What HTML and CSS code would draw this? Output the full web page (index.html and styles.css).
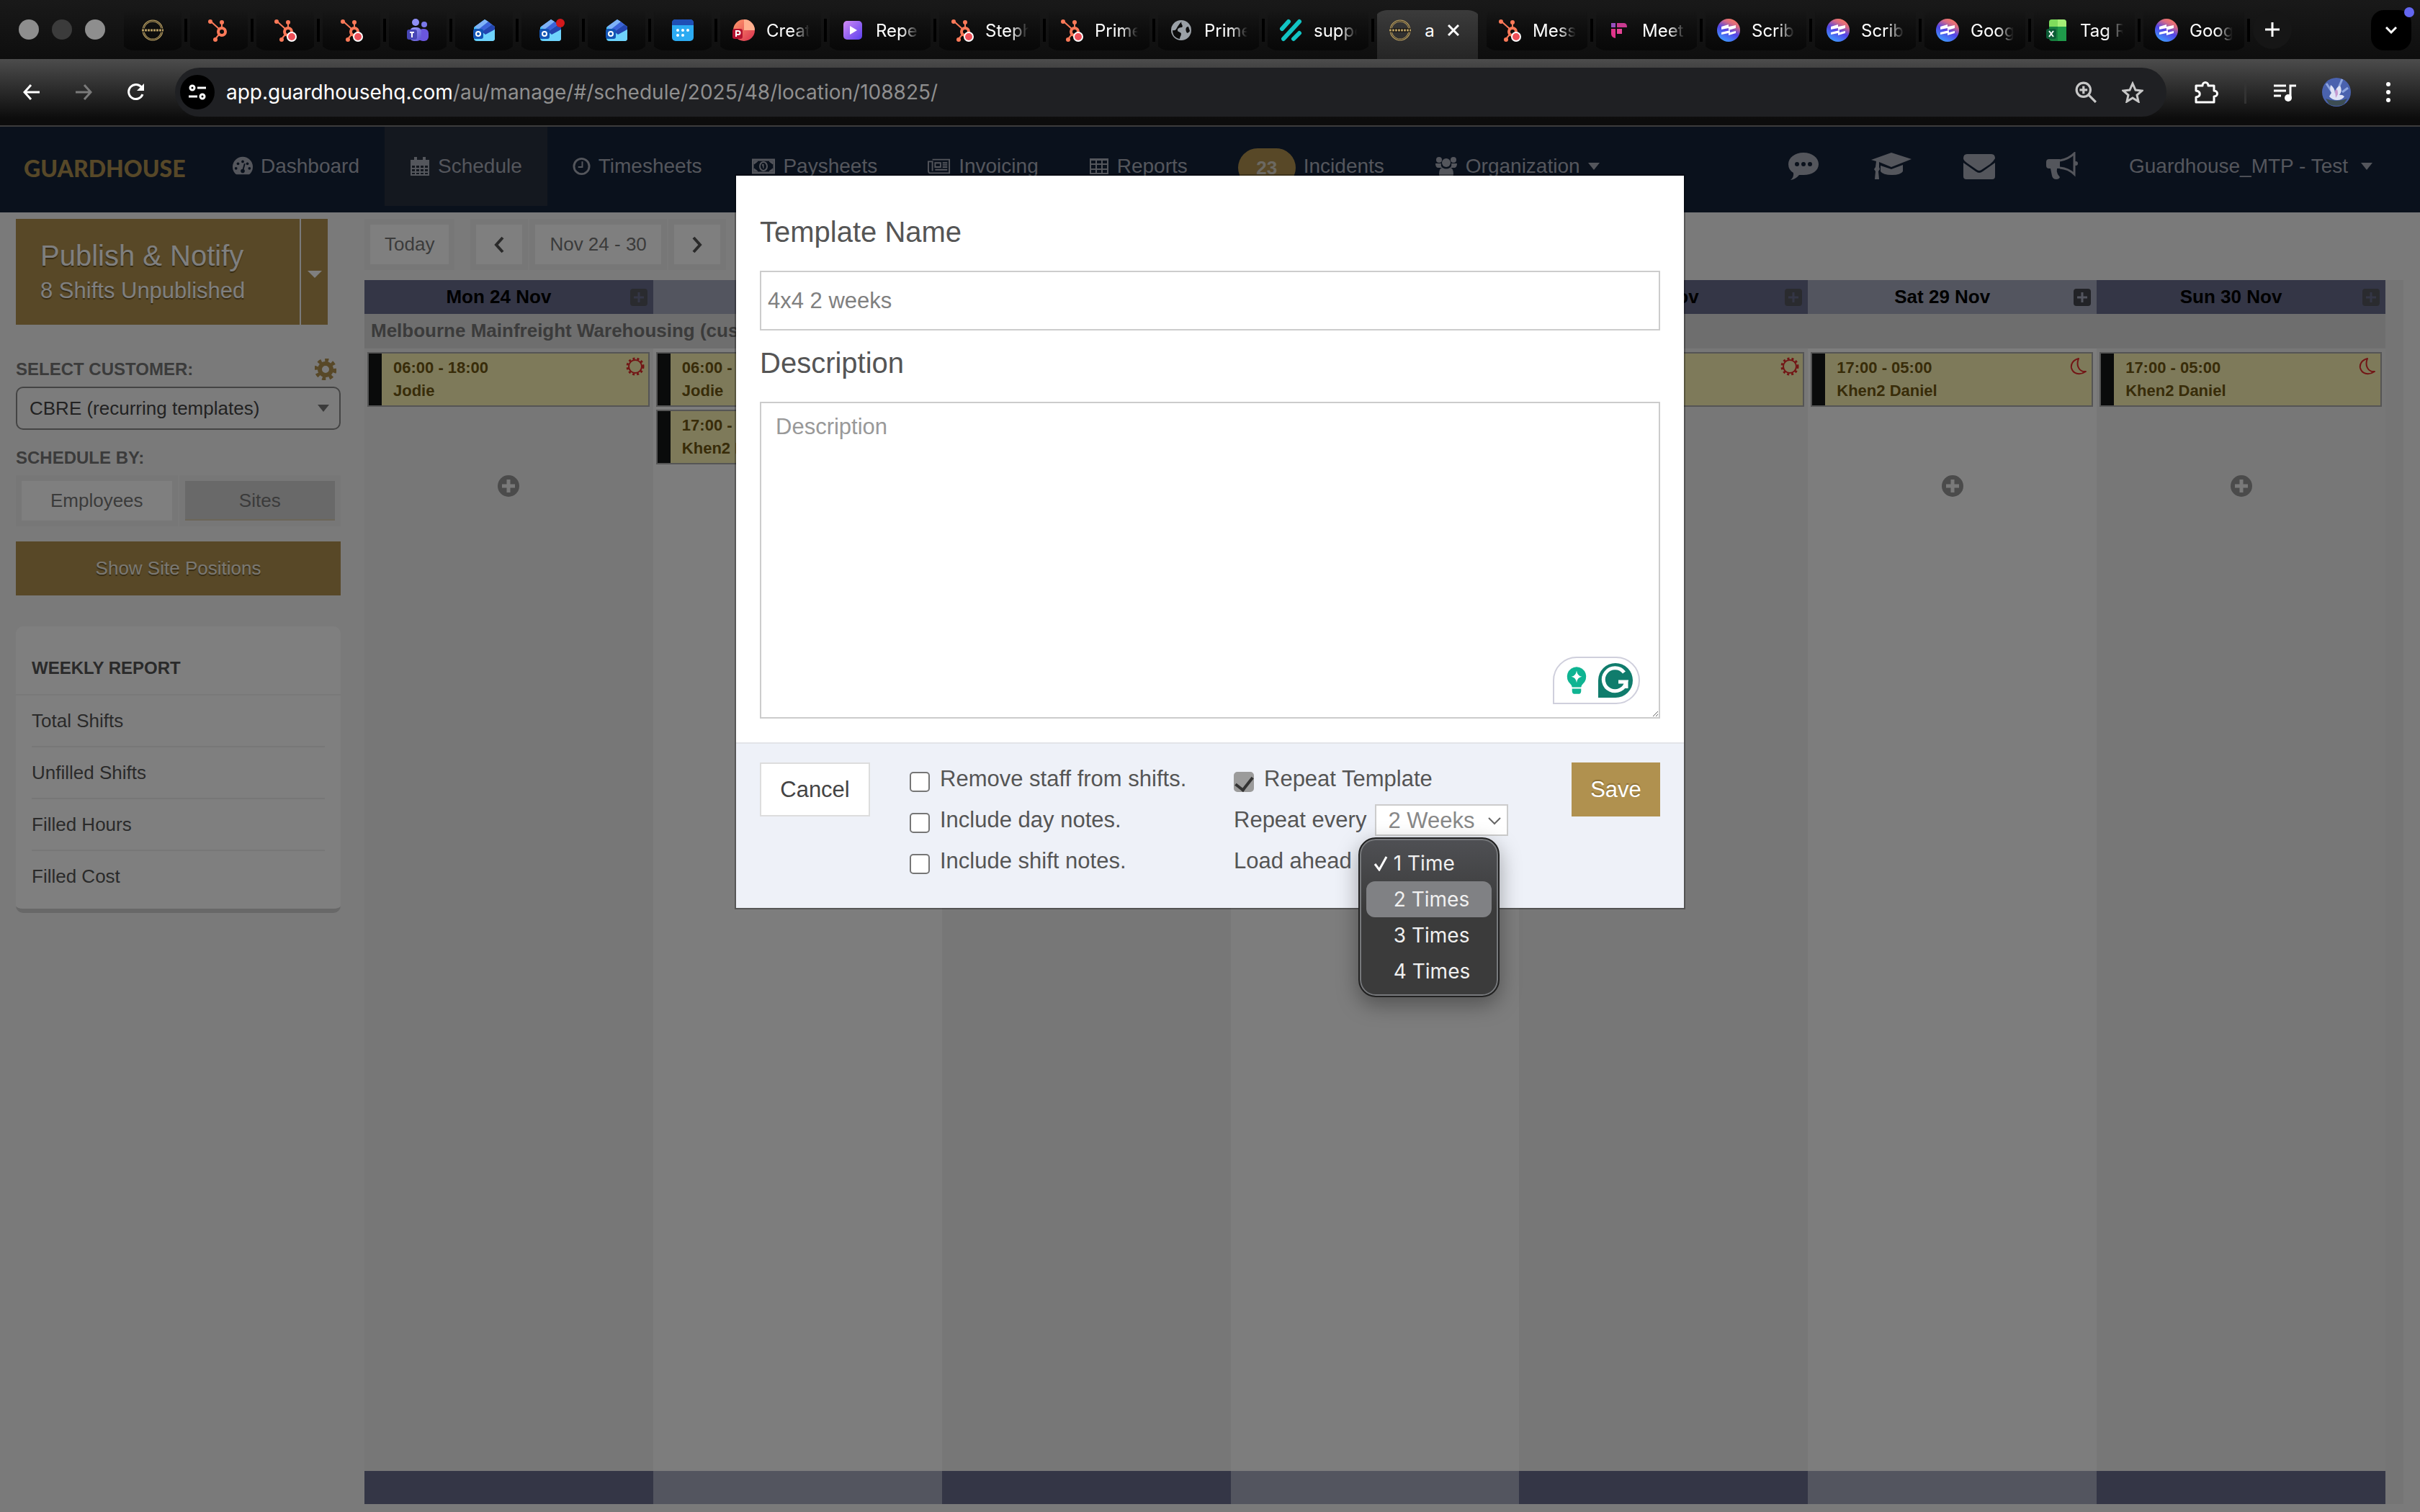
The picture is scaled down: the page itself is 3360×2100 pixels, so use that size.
FILE: index.html
```html
<!DOCTYPE html>
<html lang="en">
<head>
    <meta charset="UTF-8">
    <meta name="viewport" content="width=device-width, initial-scale=1.0">
    <title>Guardhouse - Schedule</title>
    <link rel="stylesheet" href="styles.css">
</head>
<body>
    <!-- Shared icons -->
    <svg class="sprite" aria-hidden="true">
        <defs>
            <linearGradient id="gTeams" x1="0" y1="0" x2="1" y2="1"><stop offset="0" stop-color="#a3a8ff"/><stop offset="1" stop-color="#5b4fd0"/></linearGradient>
            <linearGradient id="gMail" x1="0" y1="0" x2="1" y2="1"><stop offset="0" stop-color="#2fb7f7"/><stop offset="1" stop-color="#8fe6ff"/></linearGradient>
            <linearGradient id="gScribe" x1="0.8" y1="0" x2="0.3" y2="1"><stop offset="0" stop-color="#ff7a5c"/><stop offset="0.25" stop-color="#d76a86"/><stop offset="0.55" stop-color="#5144e6"/><stop offset="1" stop-color="#3f9dff"/></linearGradient>
            <linearGradient id="gPlay" x1="0" y1="0" x2="1" y2="1"><stop offset="0" stop-color="#d38bf5"/><stop offset="1" stop-color="#5a3fee"/></linearGradient>
            <linearGradient id="gPpt" x1="0" y1="0" x2="1" y2="1"><stop offset="0" stop-color="#ff9a6b"/><stop offset="1" stop-color="#d9304f"/></linearGradient>
        </defs>
        <symbol id="i-guard" viewBox="0 0 32 32">
            <circle cx="16" cy="16" r="13" fill="none" stroke="#b59c62" stroke-width="3"/>
            <circle cx="16" cy="16" r="13" fill="none" stroke="#3b3320" stroke-width="1"/>
            <path d="M1 16h30" stroke="#0b0b0b" stroke-width="5"/>
            <path d="M1 16h30" stroke="#b59c62" stroke-width="3" stroke-dasharray="3 1"/>
        </symbol>
        <symbol id="i-hub" viewBox="0 0 32 32">
            <g fill="none" stroke="#ff7a59">
                <circle cx="20" cy="18" r="5" stroke-width="4"/>
                <path d="M20 12V5M16 14L5 4M16 22l-5 6" stroke-width="2"/>
            </g>
            <g fill="#ff7a59"><circle cx="20" cy="5" r="3"/><circle cx="4" cy="4" r="3"/><circle cx="11" cy="29" r="3"/></g>
        </symbol>
        <symbol id="i-hubdot" viewBox="0 0 32 32">
            <use href="#i-hub"/>
            <circle cx="25" cy="25" r="7" fill="#fff"/><circle cx="25" cy="25" r="5" fill="#ef5059"/>
        </symbol>
        <symbol id="i-teams" viewBox="0 0 32 32">
            <circle cx="13" cy="5" r="5" fill="#8f8ff5"/><circle cx="25" cy="8" r="4" fill="#7a78ea"/>
            <rect x="17" y="14" width="14" height="17" rx="6" fill="#6a56dd"/>
            <rect x="5" y="12" width="16" height="19" rx="6" fill="url(#gTeams)"/>
            <rect x="1" y="15" width="14" height="14" rx="3" fill="#4746b5"/>
            <path d="M5 19h6M8 19v7" stroke="#fff" stroke-width="2"/>
        </symbol>
        <symbol id="i-outlook" viewBox="0 0 32 32">
            <path d="M2 12L17 1l14 10v16q0 4-4 4H6q-4 0-4-4z" fill="url(#gMail)"/>
            <path d="M3 11L17 1l5 3L8 15z" fill="#7fb2f8"/>
            <path d="M8 15L22 4l5 4-14 10z" fill="#3c62d8"/>
            <path d="M13 18L27 8l4 3v4L18 22z" fill="#2445b0"/>
            <path d="M31 15v12q0 4-4 4H8z" fill="#6fd3fc"/>
            <rect x="1" y="14" width="14" height="14" rx="3" fill="#1355b5"/>
            <circle cx="8" cy="21" r="3" fill="none" stroke="#fff" stroke-width="2"/>
        </symbol>
        <symbol id="i-calapp" viewBox="0 0 32 32">
            <rect x="1" y="1" width="30" height="30" rx="5" fill="#2cabf2"/>
            <path d="M1 9V6q0-5 5-5h20q5 0 5 5v3z" fill="#1f4fb5"/>
            <g fill="#fff"><circle cx="9" cy="16" r="2"/><circle cx="16" cy="16" r="2"/><circle cx="23" cy="16" r="2"/><circle cx="9" cy="23" r="2"/><circle cx="16" cy="23" r="2"/></g>
        </symbol>
        <symbol id="i-ppt" viewBox="0 0 32 32">
            <circle cx="17" cy="16" r="15" fill="url(#gPpt)"/>
            <path d="M17 1a15 15 0 0 1 15 15H17z" fill="#ffb08f"/>
            <rect x="1" y="14" width="14" height="14" rx="3" fill="#b3122f"/>
            <path d="M6 25v-8h3a2 2 0 0 1 0 5H6" fill="none" stroke="#fff" stroke-width="2"/>
        </symbol>
        <symbol id="i-play" viewBox="0 0 32 32">
            <rect x="3" y="3" width="26" height="26" rx="5" fill="url(#gPlay)"/><path d="M12 10l10 6-10 6z" fill="#fff"/>
        </symbol>
        <symbol id="i-globe" viewBox="0 0 32 32">
            <circle cx="16" cy="16" r="14" fill="#9aa0a6"/>
            <path d="M17 4c-3 3 3 5 0 8-3 0-6 1-6 4s5 2 5 5-2 4-2 7C7 27 4 22 4 16c5 1 5-2 7-5s3-5 6-7zM26 11c-4 0-4 4-3 7s3 2 5-1z" fill="#0c0c0c"/>
        </symbol>
        <symbol id="i-support" viewBox="0 0 32 32">
            <g stroke="#12c4c4" stroke-width="6" stroke-linecap="round"><path d="M4 14L13 4"/><path d="M6 28L28 4"/><path d="M20 28l8-8"/></g>
        </symbol>
        <symbol id="i-fireflies" viewBox="0 0 32 32">
            <path d="M5 6h6v6H5z" fill="#9a4fc0"/><path d="M13 6h10q4 0 4 6H13z" fill="#c93a90"/>
            <path d="M5 14h6v13q-6-1-6-6z" fill="#e0348a"/><path d="M13 14h7v7h-7z" fill="#e64496"/>
        </symbol>
        <symbol id="i-scribe" viewBox="0 0 32 32">
            <circle cx="16" cy="16" r="16" fill="url(#gScribe)"/>
            <path d="M6 11l10-3v3l10-2v4L16 16v-3L6 15zM6 19l12-3v3l8-2v3l-10 3v-3l-10 2z" fill="#fff"/>
        </symbol>
        <symbol id="i-excel" viewBox="0 0 32 32">
            <rect x="5" y="1" width="24" height="30" rx="4" fill="#17803f"/>
            <path d="M5 11V5q0-4 4-4h8v10z" fill="#7fdc5c"/><path d="M17 1h8q4 0 4 4v6H17z" fill="#a5ee77"/><path d="M17 11h12v20H17z" fill="#1f9a4a"/>
            <rect x="1" y="14" width="14" height="14" rx="3" fill="#0c5c36"/>
            <path d="M5 17l6 8M11 17l-6 8" stroke="#fff" stroke-width="2"/>
        </symbol>
        <symbol id="i-square-plus" viewBox="0 0 24 24">
            <rect x="0" y="0" width="24" height="24" rx="4" fill="currentColor"/><path d="M12 5v14M5 12h14" stroke="var(--plus)" stroke-width="3"/>
        </symbol>
        <symbol id="i-circle-plus" viewBox="0 0 30 30">
            <circle cx="15" cy="15" r="15" fill="#969696"/><path d="M15 6v18M6 15h18" stroke="#f2f2f2" stroke-width="5"/>
        </symbol>
        <symbol id="i-sun" viewBox="0 0 28 28">
            <circle cx="14" cy="14" r="9" fill="none" stroke="currentColor" stroke-width="2"/>
            <circle cx="14" cy="14" r="11" fill="none" stroke="currentColor" stroke-width="3" stroke-dasharray="3 3"/>
        </symbol>
        <symbol id="i-moon" viewBox="0 0 28 28">
            <path d="M14 3C6 5 3 11 4 16c2 8 11 11 20 5-9 1-14-8-10-18z" fill="none" stroke="currentColor" stroke-width="2" stroke-linejoin="round"/>
        </symbol>
    </svg>

    <header class="browser">
        <div class="tab-strip">
            <div class="lights"><span></span><span class="dim"></span><span></span></div>
            <button class="tab pinned" aria-label="Guardhouse"><svg><use href="#i-guard"/></svg></button>
            <button class="tab pinned" aria-label="HubSpot"><svg><use href="#i-hub"/></svg></button>
            <button class="tab pinned" aria-label="HubSpot contacts"><svg><use href="#i-hubdot"/></svg></button>
            <button class="tab pinned" aria-label="HubSpot inbox"><svg><use href="#i-hubdot"/></svg></button>
            <button class="tab pinned" aria-label="Teams"><svg><use href="#i-teams"/></svg></button>
            <button class="tab pinned" aria-label="Outlook"><svg><use href="#i-outlook"/></svg></button>
            <button class="tab pinned unread" aria-label="Outlook unread"><svg><use href="#i-outlook"/></svg></button>
            <button class="tab pinned" aria-label="Outlook mail"><svg><use href="#i-outlook"/></svg></button>
            <button class="tab pinned" aria-label="Calendar"><svg><use href="#i-calapp"/></svg></button>
            <button class="tab"><svg><use href="#i-ppt"/></svg><span>Creat</span></button>
            <button class="tab"><svg><use href="#i-play"/></svg><span>Repe</span></button>
            <button class="tab"><svg><use href="#i-hubdot"/></svg><span>Steph</span></button>
            <button class="tab"><svg><use href="#i-hubdot"/></svg><span>Prime</span></button>
            <button class="tab"><svg><use href="#i-globe"/></svg><span>Prime</span></button>
            <button class="tab"><svg><use href="#i-support"/></svg><span>suppo</span></button>
            <button class="tab active"><svg><use href="#i-guard"/></svg><b>a</b><svg class="close" viewBox="0 0 16 16"><path d="M1 1l14 14M15 1L1 15" stroke="#fff" stroke-width="3"/></svg></button>
            <button class="tab"><svg><use href="#i-hubdot"/></svg><span>Mess</span></button>
            <button class="tab"><svg><use href="#i-fireflies"/></svg><span>Meet</span></button>
            <button class="tab"><svg><use href="#i-scribe"/></svg><span>Scrib</span></button>
            <button class="tab"><svg><use href="#i-scribe"/></svg><span>Scrib</span></button>
            <button class="tab"><svg><use href="#i-scribe"/></svg><span>Goog</span></button>
            <button class="tab"><svg><use href="#i-excel"/></svg><span>Tag R</span></button>
            <button class="tab"><svg><use href="#i-scribe"/></svg><span>Goog</span></button>
            <button class="new-tab" aria-label="New tab"><svg viewBox="0 0 20 20"><path d="M10 0v20M0 10h20" stroke="#fff" stroke-width="3"/></svg></button>
            <button class="tab-search" aria-label="Search tabs"><svg viewBox="0 0 16 10"><path d="M1 1l7 7 7-7" fill="none" stroke="#fff" stroke-width="3"/></svg></button>
        </div>
        <div class="toolbar">
            <button class="tool" aria-label="Back"><svg viewBox="0 0 24 24"><path d="M23 12H2M11 2L2 12l9 10" fill="none" stroke="#fff" stroke-width="3"/></svg></button>
            <button class="tool" aria-label="Forward"><svg viewBox="0 0 24 24"><path d="M1 12h21M13 2l9 10-9 10" fill="none" stroke="#7a7a7a" stroke-width="3"/></svg></button>
            <button class="tool" aria-label="Reload"><svg viewBox="0 0 24 24"><path d="M21 6a10 10 0 1 0 1 9" fill="none" stroke="#fff" stroke-width="3"/><path d="M24 0v10H14z" fill="#fff"/></svg></button>
            <div class="omnibox">
                <button class="site-info" aria-label="Site information"><svg viewBox="0 0 24 24"><g fill="none" stroke="#fff" stroke-width="3"><circle cx="5" cy="6" r="3"/><path d="M12 6h12"/><circle cx="19" cy="18" r="3"/><path d="M0 18h12"/></g></svg></button>
                <div class="url" role="textbox" aria-label="Address">app.guardhousehq.com<span>/au/manage/#/schedule/2025/48/location/108825/</span></div>
                <button class="omni-btn" aria-label="Zoom"><svg viewBox="0 0 28 28"><g fill="none" stroke="#c7c7c7" stroke-width="3"><circle cx="11" cy="11" r="9"/><path d="M17 17l10 10M11 6v10M6 11h10"/></g></svg></button>
                <button class="omni-btn" aria-label="Bookmark"><svg viewBox="0 0 30 30"><path d="M15 3l4 9 9 1-7 6 2 9-8-5-8 5 2-9-7-6 9-1z" fill="none" stroke="#c7c7c7" stroke-width="3"/></svg></button>
            </div>
            <button class="ext" aria-label="Extensions"><svg viewBox="0 0 34 34"><path d="M3 8h9c0-6 8-6 8 0h8v7c6 0 6 8 0 8v8H3v-7c7-1 7-8 0-9z" fill="none" stroke="#fff" stroke-width="3" stroke-linejoin="round"/></svg></button>
            <i class="divider"></i>
            <button class="ext" aria-label="Media"><svg viewBox="0 0 34 34"><path d="M2 8h17M2 15h17M2 22h10" stroke="#fff" stroke-width="3"/><path d="M25 24V8h8" fill="none" stroke="#fff" stroke-width="3"/><circle cx="22" cy="25" r="5" fill="#fff"/></svg></button>
            <button class="ext" aria-label="Profile"><svg class="avatar" viewBox="0 0 40 40"><circle cx="20" cy="20" r="20" fill="#4a62ae"/><path d="M6 8l8 12M28 2l-6 14M36 14l-8 6" stroke="#8ea6e0" stroke-width="3"/><path d="M12 10q6 4 6 12 1-9 7-11 4 7-1 13 4-1 7 2-3 5-10 5-7 0-11-5 2-4 3-5-3-5-1-11z" fill="#dfe3f6"/><path d="M18 18q4-5 4 5l-3 5z" fill="#c79ad0"/><path d="M5 29q15 6 30 0l-5 8q-10 4-20 0z" fill="#3d4d53"/></svg></button>
            <button class="ext" aria-label="Menu"><svg viewBox="0 0 34 34" fill="#fff"><circle cx="17" cy="6" r="3"/><circle cx="17" cy="17" r="3"/><circle cx="17" cy="28" r="3"/></svg></button>
        </div>
    </header>

    <div class="app">
        <nav class="navbar">
            <a class="logo" href="#">GUARDHOUSE</a>
            <a class="nav-item" href="#"><svg viewBox="0 0 30 26"><path d="M4 24a15 15 0 1 1 22 0q-1 1-2 1H6q-1 0-2-1z" fill="currentColor"/><g fill="#142238"><circle cx="5" cy="16" r="2"/><circle cx="8" cy="9" r="2"/><circle cx="15" cy="6" r="2"/><circle cx="25" cy="16" r="2"/><circle cx="22" cy="9" r="2"/><circle cx="15" cy="20" r="3"/></g><path d="M15 20l3-11" stroke="#142238" stroke-width="2"/></svg>Dashboard</a>
            <a class="nav-item current" href="#"><svg viewBox="0 0 28 28"><path d="M2 6h24v20H2zM2 12h24M2 17h24M2 22h24M8 12v14M14 12v14M20 12v14" fill="none" stroke="currentColor" stroke-width="2"/><path d="M2 6h24v5H2z" fill="currentColor"/><path d="M8 1v7M20 1v7" stroke="currentColor" stroke-width="4"/></svg>Schedule</a>
            <a class="nav-item" href="#"><svg class="small" viewBox="0 0 26 26"><circle cx="13" cy="13" r="11" fill="none" stroke="currentColor" stroke-width="3"/><path d="M14 6v8H8" fill="none" stroke="currentColor" stroke-width="2"/></svg>Timesheets</a>
            <a class="nav-item" href="#"><svg class="big" viewBox="0 0 32 24"><path d="M1 3h30v18H1z" fill="none" stroke="currentColor" stroke-width="3"/><ellipse cx="16" cy="12" rx="5" ry="6" fill="none" stroke="currentColor" stroke-width="2"/><path d="M14 10l2-1v6M3 5h5l-5 4zM29 5h-5l5 4zM3 19h5l-5-4zM29 19h-5l5-4z" fill="currentColor" stroke="currentColor"/></svg>Paysheets</a>
            <a class="nav-item" href="#"><svg class="big" viewBox="0 0 34 24"><path d="M7 2h25v20H4q-3 0-3-4V5h6v14" fill="none" stroke="currentColor" stroke-width="2"/><path d="M11 7h8v6h-8zM22 7h7M22 10h7M22 13h7M11 17h18" fill="none" stroke="currentColor" stroke-width="2"/></svg>Invoicing</a>
            <a class="nav-item" href="#"><svg viewBox="0 0 28 24"><path d="M2 2h24v20H2zM2 9h24M2 16h24M10 2v20M18 2v20" fill="none" stroke="currentColor" stroke-width="2"/><path d="M2 1h24v3H2z" fill="currentColor"/></svg>Reports</a>
            <a class="nav-item" href="#"><span class="badge">23</span>Incidents</a>
            <a class="nav-item" href="#"><svg class="big" viewBox="0 0 32 28" fill="currentColor"><circle cx="6" cy="5" r="4"/><circle cx="26" cy="5" r="4"/><circle cx="16" cy="9" r="6"/><path d="M1 10h8q-1 4 2 6H4q-3-1-3-6zM31 10h-8q1 4-2 6h7q3-1 3-6zM6 25q0-9 5-9 5 3 10 0 5 0 5 9 0 3-3 3H9q-3 0-3-3z"/></svg>Organization<i class="caret"></i></a>
            <div class="nav-right">
                <a href="#" aria-label="Messages"><svg viewBox="0 0 44 40"><path d="M22 1c12 0 21 7 21 16S34 32 22 32h-6q-5 6-12 7 5-4 4-10Q1 25 1 17C1 8 10 1 22 1z" fill="currentColor"/><g fill="#142238"><circle cx="13" cy="17" r="3"/><circle cx="22" cy="17" r="3"/><circle cx="31" cy="17" r="3"/></g></svg></a>
                <a href="#" aria-label="Training"><svg class="wide" viewBox="0 0 58 40"><path d="M29 1l28 9-28 11-17-7v7l1 3-2 3 1 11H6l1-11-2-3 2-3 1-8-7-2z" fill="currentColor"/><path d="M14 19l15 5 16-6v9q-3 5-15 5-13 0-16-5z" fill="currentColor"/></svg></a>
                <a href="#" aria-label="Mail"><svg viewBox="0 0 44 40"><path d="M0 9q0-6 5-6h34q5 0 5 6-2 4-7 8L25 25q-3 2-6 0L6 16Q0 12 0 9z" fill="currentColor"/><path d="M0 15l17 12q5 4 10 0l17-12v19q0 4-4 4H4q-4 0-4-4z" fill="currentColor"/></svg></a>
                <a href="#" aria-label="Announcements"><svg viewBox="0 0 44 40"><path d="M4 10h15v13h-4q-1 4 1 8l3 4q-1 3-5 3-5 0-6-5L6 23H4q-4 0-4-4v-5q0-4 4-4z" fill="currentColor"/><path d="M19 12q12-2 20-10v29q-8-8-20-9" fill="none" stroke="currentColor" stroke-width="3"/><circle cx="41" cy="16" r="3" fill="currentColor"/></svg></a>
                <a href="#" class="account">Guardhouse_MTP - Test<i class="caret"></i></a>
            </div>
        </nav>

        <div class="page">
            <aside class="sidebar">
                <div class="publish">
                    <button class="publish-main"><strong>Publish &amp; Notify</strong><span>8 Shifts Unpublished</span></button>
                    <button class="publish-more" aria-label="More publish options"><i class="caret"></i></button>
                </div>
                <div class="side-label">
                    <label for="customer">SELECT CUSTOMER:</label>
                    <button class="gear" aria-label="Settings"><svg viewBox="0 0 30 30"><circle cx="15" cy="15" r="8" fill="none" stroke="#b0914f" stroke-width="6"/><circle cx="15" cy="15" r="13" fill="none" stroke="#b0914f" stroke-width="5" stroke-dasharray="5 5"/></svg></button>
                </div>
                <div class="customer">
                    <select id="customer"><option>CBRE (recurring templates)</option></select>
                    <i class="caret"></i>
                </div>
                <div class="side-label"><span>SCHEDULE BY:</span></div>
                <div class="toggle">
                    <button>Employees</button>
                    <button class="on">Sites</button>
                </div>
                <button class="gold-btn">Show Site Positions</button>
                <section class="report">
                    <h2>WEEKLY REPORT</h2>
                    <ul>
                        <li>Total Shifts</li>
                        <li>Unfilled Shifts</li>
                        <li>Filled Hours</li>
                        <li>Filled Cost</li>
                    </ul>
                </section>
            </aside>

            <main class="schedule">
                <div class="date-bar">
                    <button>Today</button>
                    <div class="date-nav">
                        <button class="arrow" aria-label="Previous week"><svg viewBox="0 0 16 24"><path d="M13 2L4 12l9 10" fill="none" stroke="currentColor" stroke-width="4"/></svg></button>
                        <button>Nov 24 - 30</button>
                        <button class="arrow" aria-label="Next week"><svg viewBox="0 0 16 24"><path d="M3 2l9 10-9 10" fill="none" stroke="currentColor" stroke-width="4"/></svg></button>
                    </div>
                </div>
                <div class="calendar">
                    <div class="week-head">
                        <div class="day-name"><span>Mon 24 Nov</span><svg><use href="#i-square-plus"/></svg></div>
                        <div class="day-name"><span>Tue 25 Nov</span><svg><use href="#i-square-plus"/></svg></div>
                        <div class="day-name"><span>Wed 26 Nov</span><svg><use href="#i-square-plus"/></svg></div>
                        <div class="day-name"><span>Thu 27 Nov</span><svg><use href="#i-square-plus"/></svg></div>
                        <div class="day-name"><span>Fri 28 Nov</span><svg><use href="#i-square-plus"/></svg></div>
                        <div class="day-name"><span>Sat 29 Nov</span><svg><use href="#i-square-plus"/></svg></div>
                        <div class="day-name"><span>Sun 30 Nov</span><svg><use href="#i-square-plus"/></svg></div>
                    </div>
                    <div class="location">Melbourne Mainfreight Warehousing (customer)</div>
                    <div class="week-body">
                        <div class="day">
                            <div class="shifts">
                                <div class="shift"><span>06:00 - 18:00<br>Jodie</span><svg><use href="#i-sun"/></svg></div>
                            </div>
                            <button class="add" aria-label="Add shift Monday"><svg><use href="#i-circle-plus"/></svg></button>
                        </div>
                        <div class="day">
                            <div class="shifts">
                                <div class="shift"><span>06:00 - 18:00<br>Jodie</span><svg><use href="#i-sun"/></svg></div>
                                <div class="shift"><span>17:00 - 05:00<br>Khen2 Daniel</span><svg><use href="#i-moon"/></svg></div>
                            </div>
                            <button class="add" aria-label="Add shift Tuesday"><svg><use href="#i-circle-plus"/></svg></button>
                        </div>
                        <div class="day"></div>
                        <div class="day"></div>
                        <div class="day">
                            <div class="shifts">
                                <div class="shift"><span>06:00 - 18:00<br>Jodie</span><svg><use href="#i-sun"/></svg></div>
                            </div>
                            <button class="add" aria-label="Add shift Friday"><svg><use href="#i-circle-plus"/></svg></button>
                        </div>
                        <div class="day">
                            <div class="shifts">
                                <div class="shift"><span>17:00 - 05:00<br>Khen2 Daniel</span><svg><use href="#i-moon"/></svg></div>
                            </div>
                            <button class="add" aria-label="Add shift Saturday"><svg><use href="#i-circle-plus"/></svg></button>
                        </div>
                        <div class="day">
                            <div class="shifts">
                                <div class="shift"><span>17:00 - 05:00<br>Khen2 Daniel</span><svg><use href="#i-moon"/></svg></div>
                            </div>
                            <button class="add" aria-label="Add shift Sunday"><svg><use href="#i-circle-plus"/></svg></button>
                        </div>
                    </div>
                    <div class="week-foot"><i></i><i></i><i></i><i></i><i></i><i></i><i></i></div>
                </div>
            </main>
        </div>

        <div class="backdrop">
            <form class="modal">
                <div class="modal-body">
                    <label for="tplName">Template Name</label>
                    <input type="text" id="tplName" value="4x4 2 weeks">
                    <label for="tplDesc">Description</label>
                    <div class="desc">
                        <textarea id="tplDesc" placeholder="Description"></textarea>
                        <div class="writer">
                            <svg viewBox="0 0 32 44"><path d="M16 4a13 13 0 0 1 8 23q-2 2-2 4H10q0-2-2-4a13 13 0 0 1 8-23zM10 33h12v3q0 4-4 4h-4q-4 0-4-4z" fill="#0fb492"/><path d="M16 9q1 7 7 8-6 1-7 8-1-7-7-8 6-1 7-8z" fill="#fff"/></svg>
                            <svg class="g" viewBox="0 0 48 48"><path d="M24 0a24 24 0 1 1 0 48H0V24A24 24 0 0 1 24 0z" fill="#107c6c"/><path d="M36 13a16 16 0 1 0 3 13H28M39 26v9" fill="none" stroke="#fff" stroke-width="5"/></svg>
                        </div>
                    </div>
                </div>
                <div class="modal-foot">
                    <button type="button" class="cancel">Cancel</button>
                    <div class="opts">
                        <label><input type="checkbox"> Remove staff from shifts.</label>
                        <label><input type="checkbox"> Include day notes.</label>
                        <label><input type="checkbox"> Include shift notes.</label>
                    </div>
                    <div class="opts">
                        <label><input type="checkbox" checked> Repeat Template</label>
                        <div class="opt">
                            <label for="every">Repeat every</label>
                            <div class="pick">
                                <select id="every"><option>2 Weeks</option></select>
                                <svg viewBox="0 0 18 12"><path d="M1 2l8 8 8-8" fill="none" stroke="#666" stroke-width="2"/></svg>
                            </div>
                        </div>
                        <div class="opt">
                            <label for="ahead">Load ahead</label>
                            <div class="pick">
                                <select id="ahead"><option>1 Time</option><option>2 Times</option><option>3 Times</option><option>4 Times</option></select>
                                <ul class="menu">
                                    <li><svg viewBox="0 0 20 22"><path d="M2 12l6 8L18 2" fill="none" stroke="#fff" stroke-width="3"/></svg>1 Time</li>
                                    <li class="hover">2 Times</li>
                                    <li>3 Times</li>
                                    <li>4 Times</li>
                                </ul>
                            </div>
                        </div>
                    </div>
                    <button type="button" class="save">Save</button>
                </div>
            </form>
        </div>
    </div>
</body>
</html>
```
FILE: styles.css
```css
* {
    box-sizing: border-box;
}
body {
    margin: 0;
    height: 100vh;
    display: flex;
    flex-direction: column;
    font-family: "Liberation Sans", Arial, sans-serif;
    font-size: 26px;
    color: #555;
    overflow: hidden;
}
button, input, select, textarea {
    font: inherit;
    color: inherit;
    margin: 0;
    border-radius: 0;
}
button {
    border: none;
    padding: 0;
    background: none;
    cursor: pointer;
}
a {
    color: inherit;
    text-decoration: none;
}
svg {
    display: block;
    flex: none;
}
.sprite {
    position: absolute;
    width: 0;
    height: 0;
}
.caret {
    display: inline-block;
    border: 8px solid transparent;
    border-top: 10px solid currentColor;
    border-bottom: 0;
}

/* Browser bar */
.browser {
    flex: none;
    font-family: Inter, sans-serif;
    color: #fff;
}
.tab-strip {
    display: flex;
    align-items: flex-start;
    height: 82px;
    padding: 14px 12px 0 26px;
    background: linear-gradient(#191919, #0e0e0e);
}
.lights {
    display: flex;
    gap: 18px;
    width: 140px;
    padding-top: 13px;
}
.lights span {
    width: 28px;
    height: 28px;
    border-radius: 50%;
    background: #8e8e8e;
}
.lights .dim {
    background: #3b3b3b;
}
.tab {
    position: relative;
    display: flex;
    align-items: center;
    gap: 16px;
    width: 152px;
    height: 56px;
    padding: 0 14px 0 22px;
    border-radius: 0 0 20px 20px;
    font-size: 24px;
    background: linear-gradient(transparent, #080808) 6px 0 / 140px 56px no-repeat;
}
.tab::after {
    content: "";
    position: absolute;
    right: -2px;
    top: 12px;
    width: 4px;
    height: 32px;
    background: #000;
}
.tab svg {
    width: 32px;
    height: 32px;
}
.tab span {
    overflow: hidden;
    white-space: nowrap;
    width: 60px;
    text-align: left;
    -webkit-mask-image: linear-gradient(90deg, #000 60%, transparent);
    mask-image: linear-gradient(90deg, #000 60%, transparent);
}
.tab.pinned {
    width: 92px;
    padding: 0 30px;
    background-size: 80px 56px;
}
.tab.unread::before {
    content: "";
    position: absolute;
    right: 26px;
    top: 12px;
    width: 12px;
    height: 12px;
    border-radius: 50%;
    background: #d3191c;
}
.tab.active {
    height: 68px;
    padding-bottom: 12px;
    background: linear-gradient(#3b3b3b, #252525) 6px 0 / 140px 68px no-repeat;
    border-radius: 20px 20px 0 0;
}
.tab.active::after {
    display: none;
}
.tab b {
    font-weight: 400;
    width: 18px;
}
.tab .close {
    width: 16px;
    height: 16px;
}
.new-tab {
    display: flex;
    align-items: center;
    justify-content: center;
    width: 54px;
    height: 54px;
    margin-left: 6px;
    border-radius: 50%;
    background: #161616;
}
.new-tab svg {
    width: 20px;
    height: 20px;
}
.tab-search {
    position: relative;
    display: flex;
    align-items: center;
    justify-content: center;
    width: 56px;
    height: 56px;
    margin-left: auto;
    border-radius: 18px;
    background: #000;
}
.tab-search svg {
    width: 16px;
    height: 10px;
}
.tab-search::after {
    content: "";
    position: absolute;
    right: -4px;
    top: -4px;
    width: 14px;
    height: 14px;
    border-radius: 50%;
    background: #6366f1;
}
.toolbar {
    display: flex;
    align-items: center;
    height: 94px;
    padding: 0 22px 0 8px;
    background: linear-gradient(#4c4c4c, #0c0c0c 90%);
    border-bottom: 2px solid #3c3c3c;
}
.tool {
    display: flex;
    justify-content: center;
    width: 72px;
}
.tool svg, .site-info svg {
    width: 24px;
    height: 24px;
}
.omnibox {
    flex: 1;
    display: flex;
    align-items: center;
    height: 68px;
    margin-left: 19px;
    padding: 0 32px 0 7px;
    border-radius: 34px;
    background: #1f2023;
}
.site-info {
    display: flex;
    align-items: center;
    justify-content: center;
    width: 48px;
    height: 48px;
    border-radius: 50%;
    background: #000;
}
.url {
    flex: 1;
    padding-left: 16px;
    font-size: 28px;
}
.url span {
    color: #8f8f8f;
}
.omni-btn {
    margin-left: 35px;
}
.omni-btn svg {
    width: 30px;
    height: 30px;
}
.ext {
    display: flex;
    align-items: center;
    justify-content: center;
    width: 72px;
}
.ext svg {
    width: 34px;
    height: 34px;
}
.ext .avatar {
    width: 40px;
    height: 40px;
}
.omnibox + .ext {
    margin-left: 19px;
}
.ext:last-child {
    width: 44px;
    margin-left: 14px;
}
.divider {
    width: 3px;
    height: 32px;
    margin: 0 17px;
    background: #333;
}

/* App */
.app {
    position: relative;
    flex: 1;
    display: flex;
    flex-direction: column;
    background: #f4f4f4;
}
.navbar {
    display: flex;
    height: 119px;
    padding: 0 66px 9px 33px;
    background: #142238;
    color: #a9acb8;
    font-size: 28px;
}
.logo {
    align-self: center;
    width: 255px;
    padding-top: 4px;
    font-family: Lato, sans-serif;
    font-size: 32px;
    font-weight: 900;
    color: #ae9150;
}
.nav-item {
    display: flex;
    align-items: center;
    gap: 11px;
    padding: 0 35px;
}
.nav-item svg {
    width: 28px;
    height: 28px;
}
.nav-item .small {
    width: 25px;
}
.nav-item .big {
    width: 32px;
}
.nav-item.current {
    background: #28303f;
}
.badge {
    align-self: flex-start;
    width: 80px;
    height: 54px;
    margin-top: 30px;
    border-radius: 27px;
    background: #b0914f;
    color: #d8d2c4;
    font-size: 26px;
    font-weight: 700;
    line-height: 54px;
    text-align: center;
}
.nav-right {
    display: flex;
    align-items: center;
    gap: 71px;
    margin-left: auto;
}
.nav-right svg {
    width: 44px;
    height: 40px;
}
.nav-right .wide {
    width: 58px;
}
.nav-right .account {
    display: flex;
    align-items: center;
    gap: 18px;
}
.page {
    flex: 1;
    display: flex;
}
.sidebar {
    width: 506px;
    padding: 9px 33px 0 22px;
}
.publish {
    display: flex;
    gap: 2px;
    width: 433px;
    height: 147px;
    color: #fff;
}
.publish button {
    background: #b0914f;
}
.publish-main {
    flex: 1;
    display: flex;
    flex-direction: column;
    justify-content: center;
    gap: 8px;
    padding: 2px 34px 0;
    text-align: left;
    text-shadow: 0 2px 1px #6b5527;
}
.publish-main strong {
    font-size: 40px;
    font-weight: 400;
    line-height: 42px;
}
.publish-main span {
    font-size: 31px;
    line-height: 40px;
}
.publish-more {
    width: 37px;
}
.publish-more .caret {
    border-width: 10px 10px 0;
}
.side-label {
    display: flex;
    justify-content: space-between;
    align-items: center;
    height: 30px;
    font-size: 24px;
    font-weight: 700;
    color: #777;
}
.publish + .side-label {
    margin-top: 47px;
    padding-right: 6px;
}
.gear svg {
    width: 30px;
    height: 30px;
}
.customer {
    position: relative;
    margin: 9px 0 24px;
}
.customer select {
    appearance: none;
    width: 100%;
    height: 60px;
    padding: 0 17px;
    border: 2px solid #888;
    border-radius: 10px;
    background: #f9f9f9;
    color: #444;
}
.customer .caret {
    position: absolute;
    right: 16px;
    top: 25px;
    color: #777;
}
.toggle {
    display: flex;
    gap: 2px;
    margin-top: 9px;
}
.toggle button, .date-bar button {
    height: 71px;
    border: 8px solid #eee;
    background: #fff;
    color: #777;
}
.toggle button {
    flex: 1;
}
.toggle .on {
    background: #d2d2d2;
    box-shadow: inset 0 -2px 0 #d8cdb2;
}
.gold-btn {
    display: block;
    width: 100%;
    height: 75px;
    margin-top: 21px;
    background: #b0914f;
    color: #f4f0e6;
    text-shadow: 0 2px 1px #6b5527;
}
.report {
    margin-top: 43px;
    border-radius: 10px;
    border-bottom: 6px solid #d0d0d0;
    background: #fff;
}
.report h2 {
    margin: 0;
    padding: 44px 22px 0;
    height: 96px;
    border-bottom: 2px solid #f2f2f2;
    font-size: 24px;
    line-height: 28px;
    color: #555;
}
.report ul {
    margin: 0;
    padding: 0 22px 8px;
    list-style: none;
}
.report li {
    height: 72px;
    line-height: 70px;
    color: #555;
    border-bottom: 2px solid #eee;
}
.report li:last-child {
    border: none;
}

/* Schedule */
.schedule {
    flex: 1;
    display: flex;
    flex-direction: column;
    padding: 9px 23px 11px 0;
}
.date-bar {
    display: flex;
    gap: 22px;
}
.date-bar button {
    padding: 0 20px;
}
.date-nav {
    display: flex;
    gap: 2px;
}
.date-bar .arrow {
    padding: 0 24px;
    color: #555;
}
.arrow svg {
    width: 16px;
    height: 24px;
}
.calendar {
    flex: 1;
    display: flex;
    flex-direction: column;
    margin-top: 14px;
    padding-right: 25px;
    background: linear-gradient(#eaeaea, #eaeaea) right / 25px 100% no-repeat;
}
.week-head, .week-body, .week-foot {
    display: grid;
    grid-template-columns: repeat(7, 1fr);
}
.day-name {
    display: flex;
    align-items: center;
    height: 47px;
    padding: 0 8px 0 4px;
    background: #686c8c;
    color: #000;
    font-weight: 700;
    --plus: #686c8c;
}
.day-name span {
    flex: 1;
    text-align: center;
}
.day-name svg {
    width: 24px;
    height: 24px;
    color: #55575f;
}
.day-name:nth-child(even) {
    background: #a6aabf;
    --plus: #a6aabf;
}
.day-name:nth-child(even) svg {
    color: #44464e;
}
.location {
    height: 48px;
    padding-left: 9px;
    background: #dcdcdc;
    color: #777;
    font-weight: 700;
    line-height: 47px;
}
.week-body {
    flex: 1;
}
.day {
    background: #fbfbfb;
}
.day:nth-child(odd) {
    background: #eee;
}
.shifts {
    display: flex;
    flex-direction: column;
    gap: 4px;
    min-height: 176px;
    padding: 5px 5px 0 4px;
}
.shift {
    display: flex;
    justify-content: space-between;
    height: 76px;
    padding: 4px 4px 0 34px;
    border: 2px solid #aaa;
    background: linear-gradient(#141616, #141616) left / 18px 100% no-repeat #fdf5b4;
    color: #715812;
    font-size: 22px;
    font-weight: 700;
    line-height: 32px;
}
.shift svg {
    width: 28px;
    height: 28px;
    color: #e52a2a;
}
.add {
    display: block;
    margin: 0 auto;
}
.add svg {
    width: 30px;
    height: 30px;
}
.week-foot i {
    height: 46px;
    background: #686c8c;
}
.week-foot i:nth-child(even) {
    background: #a6aabf;
}

/* Save template dialog */
.backdrop {
    position: absolute;
    inset: 0;
    padding-top: 68px;
    background: rgba(0, 0, 0, 0.5);
}
.modal {
    width: 1316px;
    margin: 0 auto;
    background: #fff;
    box-shadow: 0 0 0 2px rgba(0, 0, 0, 0.3);
}
.modal-body {
    padding: 55px 33px 33px;
    border-bottom: 2px solid #e3e4e8;
}
.modal-body label {
    display: block;
    margin-bottom: 31px;
    font-size: 40px;
    line-height: 46px;
}
.modal-body input {
    display: block;
    width: 100%;
    height: 83px;
    margin-bottom: 22px;
    padding: 0 9px;
    border: 2px solid #ccc;
    font-size: 31px;
    color: #808080;
}
.desc {
    position: relative;
}
.desc textarea {
    display: block;
    width: 100%;
    height: 440px;
    padding: 15px 20px;
    border: 2px solid #ccc;
    font-size: 31px;
}
.desc textarea::placeholder {
    color: #999;
}
.writer {
    position: absolute;
    right: 28px;
    bottom: 20px;
    display: flex;
    align-items: center;
    gap: 13px;
    width: 121px;
    height: 66px;
    padding-left: 14px;
    border: 2px solid #cfcfdc;
    border-radius: 33px 33px 33px 0;
    background: #fff;
}
.writer svg {
    width: 34px;
    height: 46px;
}
.writer .g {
    width: 48px;
    height: 48px;
}
.modal-foot {
    display: flex;
    align-items: flex-start;
    padding: 26px 33px 42px;
    background: #eef1f8;
    font-size: 31px;
}
.cancel, .save {
    height: 75px;
    border: 2px solid #ddd;
    background: #fff;
    color: #444;
}
.cancel {
    width: 153px;
    margin-right: 55px;
}
.save {
    width: 123px;
    margin-left: auto;
    border-color: #b0914f;
    background: #b0914f;
    color: #fff;
    text-shadow: 0 -2px 1px #8a6f35;
}
.opts {
    display: flex;
    flex-direction: column;
    gap: 11px;
    width: 450px;
}
.opts > label, .opt {
    display: flex;
    align-items: center;
    gap: 14px;
    height: 46px;
}
.opt {
    gap: 12px;
}
.opts input {
    appearance: none;
    width: 28px;
    height: 28px;
    margin-top: 8px;
    border: 2px solid #767676;
    border-radius: 5px;
    background: #fff;
}
.opts input:checked {
    display: grid;
    place-items: center;
    border-color: #9b9b9b;
    background: #9b9b9b;
}
.opts input:checked::before {
    content: "";
    width: 11px;
    height: 20px;
    border: solid #333;
    border-width: 0 4px 4px 0;
    transform: rotate(38deg);
}
.pick {
    position: relative;
}
.pick select {
    appearance: none;
    width: 185px;
    height: 44px;
    padding: 0 16px;
    border: 2px solid #ccc;
    background: #fff;
    color: #888;
}
.pick > svg {
    position: absolute;
    right: 10px;
    top: 17px;
    width: 18px;
    height: 12px;
}
.menu {
    position: absolute;
    top: -11px;
    left: -3px;
    width: 196px;
    margin: 0;
    padding: 9px 9px;
    list-style: none;
    border: 2px solid #222;
    border-radius: 24px;
    background: linear-gradient(#4f5054, #3b3b3b 45%);
    box-shadow: inset 0 0 0 2px #77797c, 0 10px 30px rgba(0, 0, 0, 0.35);
    color: #f0f0f0;
    font-family: Inter, sans-serif;
    font-size: 28px;
}
.menu li {
    display: flex;
    align-items: center;
    height: 50px;
    padding-left: 38px;
    border-radius: 12px;
}
.menu li svg {
    width: 20px;
    height: 22px;
    margin: 0 8px 0 -28px;
}
.menu .hover {
    background: #808184;
}
#ahead {
    width: 180px;
}
```
